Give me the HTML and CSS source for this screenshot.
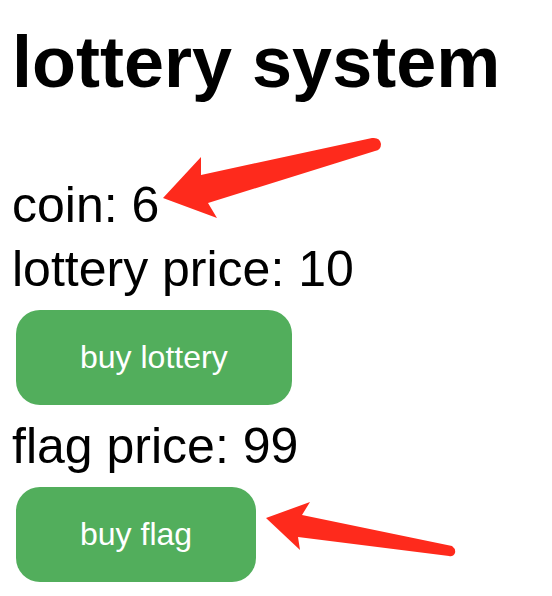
FILE: index.html
```html
<!DOCTYPE html>
<html>
<head>
<meta charset="utf-8">
<link rel="stylesheet" href="styles.css">
</head>
<body>
<div class="page">
  <h1 class="title">lottery system</h1>
  <p class="line line-coin">coin: 6</p>
  <p class="line">lottery price: 10</p>
  <button class="btn">buy lottery</button>
  <p class="line">flag price: 99</p>
  <button class="btn">buy flag</button>
</div>
<svg class="annot" width="552" height="596" viewBox="0 0 552 596">
  <path fill="#fe2a1c" d="M163 198 L201 157 L201 175 L372 138 Q380 137 381 144 Q381 150 375 151 L208 203 L217 218 Z"/>
  <path fill="#fe2a1c" d="M266 518 L310 502 L302 515 L452 546 Q456 549 455 553 Q453 557 449 556 L298 537 L300 550 Z"/>
</svg>
</body>
</html>
```
FILE: styles.css
```css
html, body {
  margin: 0;
  padding: 0;
  background: #ffffff;
}
.page {
  display: flex;
  flex-direction: column;
  align-items: flex-start;
  padding-left: 12px;
  font-family: "Liberation Sans", Arial, sans-serif;
  color: #000;
}
.title {
  margin: 22px 0 0 0;
  font-size: 72px;
  font-weight: bold;
  line-height: 80px;
}
.line {
  margin: 0;
  font-size: 50px;
  line-height: 64px;
}
.line-coin {
  margin-top: 71px;
}
.btn {
  margin: 9px 0 9px 4px;
  height: 95px;
  padding: 0 64px;
  border: none;
  border-radius: 24px;
  background: #52ae5c;
  color: #ffffff;
  font-family: "Liberation Sans", Arial, sans-serif;
  font-size: 32px;
  display: flex;
  align-items: center;
}
.annot {
  position: absolute;
  left: 0;
  top: 0;
  pointer-events: none;
}
```
